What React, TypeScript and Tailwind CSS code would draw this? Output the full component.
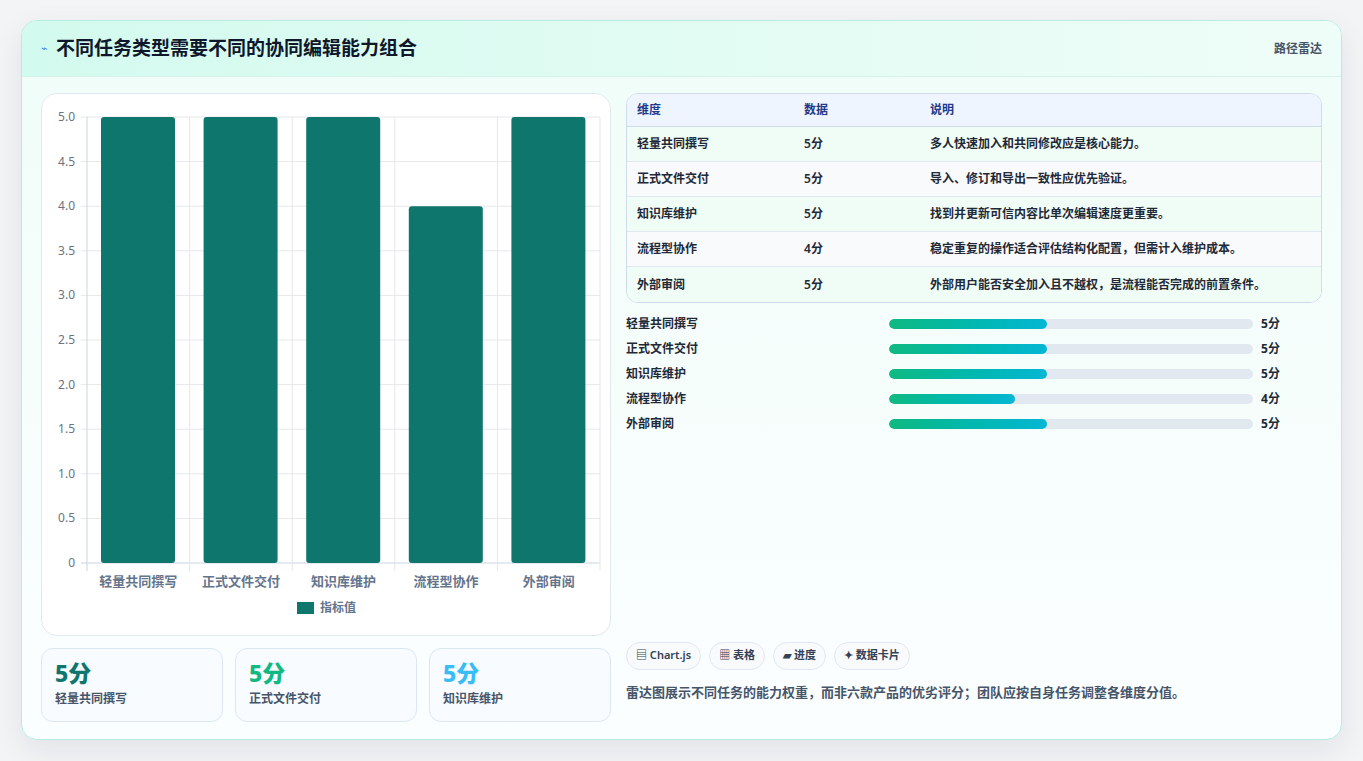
import React from "react";

const font = { fontFamily: '"Noto Sans", "Noto Sans CJK SC", sans-serif' };

const rows = [
  { name: "轻量共同撰写", score: 5, note: "多人快速加入和共同修改应是核心能力。" },
  { name: "正式文件交付", score: 5, note: "导入、修订和导出一致性应优先验证。" },
  { name: "知识库维护", score: 5, note: "找到并更新可信内容比单次编辑速度更重要。" },
  { name: "流程型协作", score: 4, note: "稳定重复的操作适合评估结构化配置，但需计入维护成本。" },
  { name: "外部审阅", score: 5, note: "外部用户能否安全加入且不越权，是流程能否完成的前置条件。" },
];

function BarChart() {
  // plot area inside card coordinates
  const x0 = 45, x1 = 558, yTop = 23, yBot = 469;
  const step = (x1 - x0) / 5;
  const ticks = [0, 0.5, 1, 1.5, 2, 2.5, 3, 3.5, 4, 4.5, 5];
  const yOf = (v: number) => yBot - (v / 5) * (yBot - yTop);
  return (
    <svg width="570" height="543" className="block">
      {ticks.map((t) => (
        <g key={t}>
          <line x1={x0 - 6} x2={x1} y1={yOf(t)} y2={yOf(t)} stroke={t === 0 ? "#cbd5e1" : "#e5e7eb"} />
          <text x={x0 - 12} y={yOf(t) + 4} textAnchor="end" fontSize="12" fill="#6b7280" style={font}>
            {t === 0 ? "0" : t.toFixed(1)}
          </text>
        </g>
      ))}
      {[0, 1, 2, 3, 4, 5].map((i) => (
        <line key={i} x1={x0 + i * step} x2={x0 + i * step} y1={yTop} y2={yBot + 8} stroke={i === 0 ? "#cbd5e1" : "#e5e7eb"} />
      ))}
      {rows.map((r, i) => (
        <g key={r.name}>
          <rect x={x0 + i * step + 14} y={yOf(r.score)} width={74} height={yBot - yOf(r.score)} rx={3} fill="#0f766e" />
          <text x={x0 + i * step + step / 2} y={492} textAnchor="middle" fontSize="13" fontWeight="600" fill="#64748b" style={font}>
            {r.name}
          </text>
        </g>
      ))}
      <rect x={255} y={508} width={17} height={12} fill="#0f766e" />
      <text x={278} y={518} fontSize="12" fontWeight="600" fill="#64748b" style={font}>指标值</text>
    </svg>
  );
}

export default function App() {
  return (
    <div className="min-h-screen bg-[#f3f4f6] pt-5 pl-[21px] pr-[21px]" style={font}>
      <div className="w-[1321px] h-[720px] rounded-2xl border border-[#b7ece0] bg-gradient-to-b from-[#f0fdf8] to-[#fbfeff] shadow-[0_10px_30px_rgba(15,23,42,0.08)] overflow-hidden flex flex-col">
        <div className="h-[56px] shrink-0 flex items-center justify-between px-[19px] bg-gradient-to-r from-[#d3faee] to-[#effdf8] border-b border-[#d6f3ea]">
          <div className="flex items-center gap-2">
            <span className="text-[11px] text-[#3b82f6]">⌁</span>
            <h1 className="text-[19px] font-bold text-[#0f172a]">不同任务类型需要不同的协同编辑能力组合</h1>
          </div>
          <span className="text-xs font-semibold text-[#475569]">路径雷达</span>
        </div>
        <div className="flex gap-[15px] px-[19px] pt-4">
          <div className="w-[570px] flex flex-col gap-3">
            <div className="h-[543px] rounded-2xl border border-[#e2e8f0] bg-white">
              <BarChart />
            </div>
            <div className="grid grid-cols-3 gap-3">
              {[
                { c: "text-[#0f766e]", r: rows[0] },
                { c: "text-[#10b981]", r: rows[1] },
                { c: "text-[#38bdf8]", r: rows[2] },
              ].map(({ c, r }) => (
                <div key={r.name} className="h-[74px] rounded-xl border border-[#dbe7f3] bg-[#f8fbff] px-[13px] pt-[10px]">
                  <div className={`text-[23px] font-extrabold leading-7 ${c}`}>{r.score}分</div>
                  <div className="mt-1 text-xs font-semibold text-[#475569]">{r.name}</div>
                </div>
              ))}
            </div>
          </div>
          <div className="flex-1 flex flex-col">
            <div className="rounded-xl border border-[#cfdbe8] overflow-hidden bg-white">
              <div className="h-[33px] flex items-center bg-[#eef5fe] border-b border-[#cfdbe8] text-xs font-semibold text-[#1e3a8a] px-[10px]">
                <span className="w-[167px]">维度</span>
                <span className="w-[126px]">数据</span>
                <span>说明</span>
              </div>
              {rows.map((r, i) => (
                <div key={r.name} className={`h-[35px] flex items-center px-[10px] text-xs font-semibold text-[#1f2937] ${i % 2 === 0 ? "bg-[#f0fdf6]" : "bg-[#f8fafc]"} ${i < 4 ? "border-b border-[#e2e8f0]" : ""}`}>
                  <span className="w-[167px]">{r.name}</span>
                  <span className="w-[126px]">{r.score}分</span>
                  <span>{r.note}</span>
                </div>
              ))}
            </div>
            <div className="mt-[12px] flex flex-col gap-[7px]">
              {rows.map((r) => (
                <div key={r.name} className="h-[18px] flex items-center text-xs font-semibold text-[#1f2937]">
                  <span className="w-[263px]">{r.name}</span>
                  <div className="w-[364px] h-[10px] rounded-full bg-[#e2e8f0] overflow-hidden">
                    <div className="h-full rounded-full bg-gradient-to-r from-[#10b981] to-[#06b6d4]" style={{ width: `${r.score * 8.68}%` }} />
                  </div>
                  <span className="ml-2 font-bold">{r.score}分</span>
                </div>
              ))}
            </div>
            <div className="flex-1" />
            <div className="flex gap-2 mb-[13px] mt-auto" style={{ marginTop: 0 }}>
              {["▤ Chart.js", "▦ 表格", "▰ 进度", "✦ 数据卡片"].map((t) => (
                <span key={t} className="h-[28px] px-[9px] flex items-center rounded-full border border-[#e2e8f0] bg-[#f8fafc] text-[11px] font-semibold text-[#334155]">{t}</span>
              ))}
            </div>
            <p className="text-[13px] font-semibold text-[#475569] mb-[20px]">雷达图展示不同任务的能力权重，而非六款产品的优劣评分；团队应按自身任务调整各维度分值。</p>
          </div>
        </div>
      </div>
    </div>
  );
}
